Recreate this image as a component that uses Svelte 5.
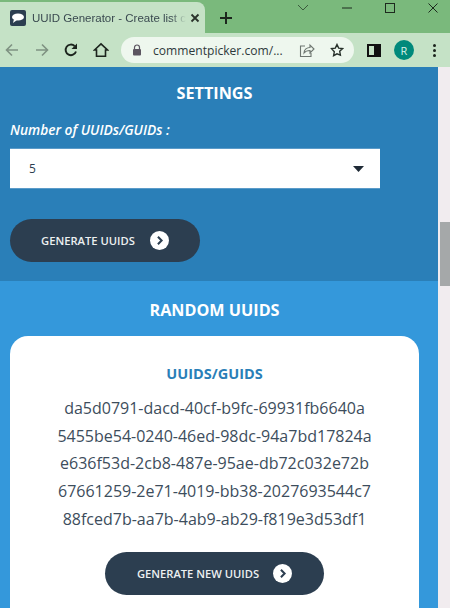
<script>
  const uuids = [
    "da5d0791-dacd-40cf-b9fc-69931fb6640a",
    "5455be54-0240-46ed-98dc-94a7bd17824a",
    "e636f53d-2cb8-487e-95ae-db72c032e72b",
    "67661259-2e71-4019-bb38-2027693544c7",
    "88fced7b-aa7b-4ab9-ab29-f819e3d53df1",
  ];
</script>

<div class="window">
  <div class="tabstrip">
    <div class="tab">
      <svg class="favicon" width="16" height="16" viewBox="0 0 16 16">
        <rect width="16" height="16" rx="2" fill="#2c3e50" />
        <ellipse cx="8" cy="7" rx="6" ry="3.6" fill="#fff" />
        <path d="M4 9l-1 4 4-3z" fill="#fff" />
      </svg>
      <span class="tab-title">UUID Generator - Create list c</span>
      <svg class="tab-close" width="10" height="10" viewBox="0 0 10 10">
        <path d="M1.5 1.5l7 7M8.5 1.5l-7 7" stroke="#2a332b" stroke-width="1.8" />
      </svg>
    </div>
    <svg class="newtab" width="12" height="12" viewBox="0 0 12 12">
      <path d="M6 0v12M0 6h12" stroke="#1c261d" stroke-width="2" />
    </svg>
    <div class="winctl">
      <svg width="14" height="10" viewBox="0 0 14 10"><path d="M2 2l5 5 5-5" fill="none" stroke="#3b5a3d" stroke-width="1" /></svg>
      <svg width="12" height="12" viewBox="0 0 12 12"><path d="M1 6h10" stroke="#1d2a1e" stroke-width="1" /></svg>
      <svg width="12" height="12" viewBox="0 0 12 12"><rect x="1.5" y="1.5" width="9" height="9" fill="none" stroke="#1d2a1e" /></svg>
      <svg width="12" height="12" viewBox="0 0 12 12"><path d="M1.5 1.5l9 9M10.5 1.5l-9 9" stroke="#1d2a1e" /></svg>
    </div>
  </div>

  <div class="toolbar">
    <svg class="tool" width="16" height="16" viewBox="0 0 16 16"><path d="M14 8H2.5M8 2.5L2.5 8 8 13.5" fill="none" stroke="#7f9282" stroke-width="1.6" /></svg>
    <svg class="tool" width="16" height="16" viewBox="0 0 16 16"><path d="M2 8h11.5M8 2.5L13.5 8 8 13.5" fill="none" stroke="#7f9282" stroke-width="1.6" /></svg>
    <svg class="tool" width="16" height="16" viewBox="0 0 16 16"><path d="M13 9.5A5.3 5.3 0 1 1 11.6 4" fill="none" stroke="#1c241d" stroke-width="1.9" /><path d="M14 1.5V7H8.5z" fill="#1c241d" /></svg>
    <svg class="tool" width="16" height="16" viewBox="0 0 16 16"><path d="M1.5 8L8 1.8 14.5 8H12.5V14.2H3.5V8z" fill="none" stroke="#1c241d" stroke-width="1.6" /></svg>
    <div class="omnibox">
      <svg width="10" height="12" viewBox="0 0 10 12"><path d="M2.5 5V3.5a2.5 2.5 0 0 1 5 0V5" fill="none" stroke="#5b5560" stroke-width="1.2" /><rect x="1" y="5" width="8" height="6.5" rx="1" fill="#5b5560" /></svg>
      <span class="url">commentpicker.com/...</span>
      <svg class="omni-share" width="16" height="15" viewBox="0 0 16 15"><path d="M6 3H1.5v10.5H12V10M5 10c0-3.5 3-5.5 6-5.5V2l4 4-4 4V7.5C8.500 7.500 6.500 8 5 10z" fill="none" stroke="#6d7670" stroke-width="1.1" /></svg>
      <svg class="omni-star" width="14" height="14" viewBox="0 0 14 14"><path d="M7 1.500l1.700 3.600 3.800.5-2.800 2.700.7 3.900L7 10.800l-3.400 1.900.7-3.900L1.500 5.600l3.800-.5z" fill="none" stroke="#27302a" stroke-width="1.4" /></svg>
    </div>
    <svg class="sidepanel" width="14" height="13" viewBox="0 0 14 13"><rect x="1" y="1" width="12" height="11" fill="none" stroke="#111" stroke-width="2" /><rect x="7" y="1" width="6" height="11" fill="#111" /></svg>
    <div class="avatar">R</div>
    <div class="dots"><i></i><i></i><i></i></div>
  </div>

  <div class="viewport">
    <main>
      <section class="settings">
        <h2>SETTINGS</h2>
        <label for="count">Number of UUIDs/GUIDs :</label>
        <div class="select" id="count">
          <span>5</span>
          <svg width="11" height="6" viewBox="0 0 11 6"><path d="M0 0h11L5.500 6z" fill="#1f2a36" /></svg>
        </div>
        <button class="pill first">
          GENERATE UUIDS
          <svg width="19" height="19" viewBox="0 0 18 18"><circle cx="9" cy="9" r="9" fill="#fff" /><path d="M7.500 5.500L11 9l-3.500 3.500" fill="none" stroke="#2c3e50" stroke-width="1.900" /></svg>
        </button>
      </section>

      <section class="random">
        <h2>RANDOM UUIDS</h2>
        <div class="card">
          <h3>UUIDS/GUIDS</h3>
          <div class="list">
            {#each uuids as id}
              <div>{id}</div>
            {/each}
          </div>
          <button class="pill second">
            GENERATE NEW UUIDS
            <svg width="19" height="19" viewBox="0 0 18 18"><circle cx="9" cy="9" r="9" fill="#fff" /><path d="M7.500 5.500L11 9l-3.500 3.500" fill="none" stroke="#2c3e50" stroke-width="1.900" /></svg>
          </button>
        </div>
      </section>
    </main>
    <div class="scrollbar"><div class="thumb"></div></div>
  </div>
</div>

<style>
  :global(body) {
    margin: 0;
    overflow: hidden;
  }

  .window {
    width: 450px;
    height: 608px;
    overflow: hidden;
    display: flex;
    flex-direction: column;
    font-family: "Open Sans", "Noto Sans", sans-serif;
  }

  .tabstrip {
    height: 33px;
    flex: none;
    background: #7ab97c;
    display: flex;
    align-items: flex-end;
  }

  .tab {
    width: 205px;
    height: 31px;
    box-sizing: border-box;
    background: #c5e2c6;
    border-radius: 0 8px 0 0;
    display: flex;
    align-items: center;
    padding: 0 13px 0 10px;
  }

  .favicon {
    flex: none;
  }

  .tab-title {
    flex: 1;
    margin-left: 6px;
    font-family: "Liberation Sans", sans-serif;
    font-size: 11.5px;
    color: #3a4a50;
    white-space: nowrap;
    -webkit-mask-image: linear-gradient(to right, #000 90%, transparent);
    mask-image: linear-gradient(to right, #000 90%, transparent);
  }

  .tab-close {
    flex: none;
    margin-left: 4px;
  }

  .newtab {
    margin: 0 0 9px 15px;
  }

  .winctl {
    margin-left: auto;
    align-self: flex-start;
    display: flex;
    align-items: center;
    height: 14px;
    gap: 31px;
    padding: 1px 11px 0 0;
  }

  .toolbar {
    height: 34px;
    flex: none;
    background: #c5e2c6;
    display: flex;
    align-items: center;
    padding: 0 0 0 4px;
  }

  .tool {
    flex: none;
    margin-right: 13.5px;
  }

  .omnibox {
    width: 233px;
    height: 26px;
    margin-left: -1px;
    box-sizing: border-box;
    border-radius: 13px;
    background: #eef7ee;
    display: flex;
    align-items: center;
    padding: 0 10px 0 11px;
  }

  .url {
    margin-left: 11px;
    font-size: 12.1px;
    color: #2e3a3c;
    white-space: nowrap;
  }

  .omni-share {
    margin-left: auto;
  }

  .omni-star {
    margin-left: 15px;
  }

  .sidepanel {
    margin-left: 13px;
  }

  .avatar {
    width: 20px;
    height: 20px;
    margin-left: 13px;
    border-radius: 50%;
    background: #00897b;
    color: #d8efe9;
    font-size: 11px;
    display: flex;
    align-items: center;
    justify-content: center;
  }

  .dots {
    margin-left: 19px;
    display: flex;
    flex-direction: column;
    gap: 2px;
  }

  .dots i {
    width: 3px;
    height: 3px;
    border-radius: 50%;
    background: #1c241d;
  }

  .viewport {
    flex: 1;
    min-height: 0;
    display: flex;
  }

  main {
    flex: 1;
    min-width: 0;
    overflow: hidden;
  }

  .scrollbar {
    width: 12px;
    flex: none;
    background: #f1ecef;
    padding-top: 155px;
    box-sizing: border-box;
  }

  .thumb {
    height: 64px;
    margin-left: 2px;
    background: #a5a8a9;
  }

  section {
    color: #fff;
  }

  h2 {
    margin: 0;
    text-align: center;
    font-size: 16.2px;
    line-height: 22px;
    font-weight: 700;
  }

  .settings {
    height: 214px;
    box-sizing: border-box;
    background: #2a7fb8;
    padding: 15px 19px 0 10px;
  }

  label {
    display: block;
    margin-top: 17px;
    font-size: 13.7px;
    line-height: 18px;
    font-style: italic;
    font-weight: 600;
  }

  .select {
    width: 370px;
    height: 41px;
    margin-top: 9px;
    box-sizing: border-box;
    background: #fff;
    border: 1px solid #5b9bc9;
    border-width: 1px 0;
    color: #2c3e50;
    font-size: 12px;
    display: flex;
    align-items: center;
    justify-content: space-between;
    padding: 0 16px 0 19px;
  }

  .pill {
    display: flex;
    align-items: center;
    justify-content: center;
    height: 43px;
    padding: 0;
    border: none;
    border-radius: 22px;
    background: #2c3e50;
    color: #ecf0f1;
    font-family: inherit;
    font-size: 11.2px;
    font-weight: 600;
  }

  .first {
    width: 190px;
    margin-top: 30px;
    gap: 15px;
  }

  .random {
    height: 327px;
    box-sizing: border-box;
    background: #3498db;
    padding: 18px 19px 0 10px;
  }

  .card {
    margin-top: 15px;
    height: 300px;
    box-sizing: border-box;
    background: #fff;
    border-radius: 18px;
    padding-top: 28px;
    display: flex;
    flex-direction: column;
    align-items: center;
  }

  h3 {
    margin: 0;
    font-size: 14.5px;
    line-height: 20px;
    font-weight: 700;
    color: #2a7fb8;
  }

  .list {
    margin-top: 11px;
    color: #3d4d5c;
    font-size: 16px;
    line-height: 27.7px;
    text-align: center;
    white-space: nowrap;
  }

  .second {
    width: 219px;
    margin-top: 18px;
    gap: 14px;
  }
</style>
